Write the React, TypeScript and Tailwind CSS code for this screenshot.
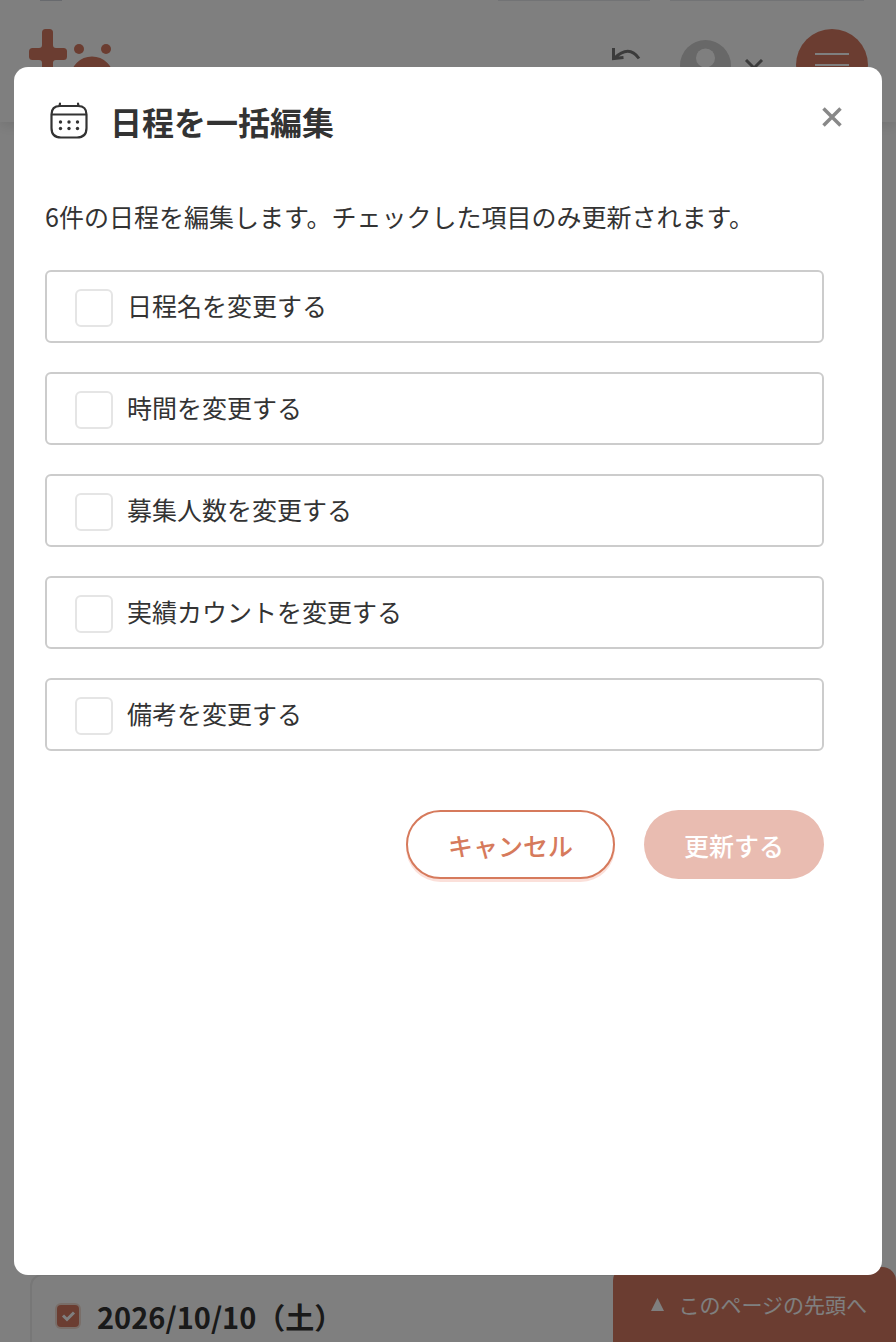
import { useState } from "react";

const FIELDS = [
  { id: "name", label: "日程名を変更する" },
  { id: "time", label: "時間を変更する" },
  { id: "capacity", label: "募集人数を変更する" },
  { id: "count", label: "実績カウントを変更する" },
  { id: "note", label: "備考を変更する" },
];

function Logo() {
  return (
    <svg className="w-[84px] h-[72px]" viewBox="0 0 84 72" fill="#d67a62" aria-label="ロゴ">
      <rect x="13" y="0" width="11" height="64" rx="3.500" />
      <rect x="0" y="19" width="38" height="12" rx="3.500" />
      <path d="M10 19q3 0 3-3h11q0 3 3 3v12q-3 0-3 3H13q0-3-3-3z" />
      <circle cx="50" cy="20" r="5" />
      <circle cx="77" cy="20" r="5" />
      <circle cx="63" cy="49" r="16" fill="none" stroke="#d67a62" strokeWidth="11" />
    </svg>
  );
}

function CalendarIcon() {
  return (
    <svg className="w-[38px] h-[38px] shrink-0" viewBox="0 0 38 38" fill="none" stroke="#333" strokeWidth="2.2" strokeLinecap="round">
      <path d="M10 4h18q8.500 0 8.500 8.500V26q0 9.500-9.500 9.500H11q-9.500 0-9.500-9.500V12.500Q1.500 4 10 4z" />
      <path d="M1.500 12.500h35" strokeLinecap="butt" />
      <path d="M9.500 4L10 1.500M28.500 4L28 1.500" />
      <g fill="#333" stroke="none">
        <circle cx="10.500" cy="20" r="1.700" />
        <circle cx="19" cy="20" r="1.700" />
        <circle cx="27.500" cy="20" r="1.700" />
        <circle cx="10.500" cy="26.500" r="1.700" />
        <circle cx="19" cy="26.500" r="1.700" />
        <circle cx="27.500" cy="26.500" r="1.700" />
      </g>
    </svg>
  );
}

function PageHeader() {
  return (
    <header className="bg-white shadow-[0_4px_12px_rgba(0,0,0,0.1)]">
      <div className="flex h-px pl-10 pr-8">
        <div className="w-[22px] bg-gray-300" />
        <div className="ml-auto w-[152px] bg-gray-200" />
        <div className="ml-5 w-[194px] bg-gray-200" />
      </div>
      <div className="flex items-center justify-between pt-7 pb-[21px] pl-[29px] pr-7">
        <a href="#top">
          <Logo />
        </a>
        <div className="flex items-center">
          <button aria-label="元に戻す" className="mr-[39px]">
            <svg className="w-[30px] h-[34px]" viewBox="0 0 30 34" fill="none" stroke="#777" strokeWidth="3">
              <path d="M2.500 0v10.500l10-1M3 10.500Q18-4 28 10.500" />
            </svg>
          </button>
          <button aria-label="アカウント" className="flex items-center mr-8">
            <svg className="w-[51px] h-[51px]" viewBox="0 0 51 51">
              <circle cx="25.500" cy="25.500" r="25.500" fill="#d0d0d0" />
              <circle cx="25.500" cy="18" r="9.500" fill="#fff" />
              <path d="M10 42q0-12 15.500-12T41 42z" fill="#fff" />
            </svg>
            <svg className="ml-[13px] w-5 h-3" viewBox="0 0 20 12" fill="none" stroke="#777" strokeWidth="3">
              <path d="M2 1l8 8 8-8" />
            </svg>
          </button>
          <button aria-label="メニュー" className="w-[72px] h-[72px] rounded-full bg-[#d67a62] flex flex-col items-center justify-center gap-[9px]">
            <span className="w-[34px] h-0.5 bg-white" />
            <span className="w-[34px] h-0.5 bg-white" />
            <span className="w-[34px] h-0.5 bg-white" />
          </button>
        </div>
      </div>
    </header>
  );
}

export default function App() {
  const [checked, setChecked] = useState<string[]>([]);

  const toggle = (id: string) => {
    setChecked((prev) =>
      prev.includes(id) ? prev.filter((v) => v !== id) : [...prev, id]
    );
  };

  return (
    <div className="min-h-screen flex flex-col bg-white text-[#333] font-['Noto_Sans_CJK_JP',sans-serif]">
      <PageHeader />

      <main className="flex-1 flex flex-col justify-end pl-[30px] pr-7">
        <div className="h-[68px] rounded-t-xl border-2 border-b-0 border-[#eee] pl-[25px] pt-4">
          <label className="flex items-center gap-[18px] text-[29px] leading-[48px] font-bold">
            <span className="relative flex w-[22px] h-[22px]">
              <input
                type="checkbox"
                defaultChecked
                className="appearance-none w-[22px] h-[22px] rounded-sm bg-[#d67a62] ring-2 ring-[#f3ddd3]"
              />
              <svg className="absolute inset-0 pointer-events-none" viewBox="0 0 22 22" fill="none" stroke="#fff" strokeWidth="3">
                <path d="M6 10.500l4 4 7-7" />
              </svg>
            </span>
            2026/10/10（土）
          </label>
        </div>
      </main>

      <a
        href="#top"
        className="fixed right-0 bottom-0 flex items-center gap-3.5 pl-[38px] pr-[29px] h-[75px] rounded-t-[14px] bg-[#d67a62] text-white text-[21px]"
      >
        <svg className="w-[13px] h-[13px]" viewBox="0 0 13 13" fill="currentColor">
          <path d="M6.500 0L13 13H0z" />
        </svg>
        このページの先頭へ
      </a>

      {/* Modal */}
      <div className="fixed inset-0 bg-black/50 px-3.5 py-[67px]">
        <div
          role="dialog"
          aria-modal="true"
          aria-labelledby="modal-title"
          className="h-full overflow-y-auto rounded-[14px] bg-white pl-[31px] pr-[58px] pt-[30px]"
        >
          <div className="flex items-center pl-[5px]">
            <CalendarIcon />
            <h1 id="modal-title" className="ml-[22px] text-[32px] leading-[48px] font-bold">
              日程を一括編集
            </h1>
            <button aria-label="閉じる" className="ml-auto -mr-5 mb-2 p-0.5">
              <svg className="w-5 h-5" viewBox="0 0 20 20" fill="none" stroke="#888" strokeWidth="3.500">
                <path d="M1.500 1.500l17 17M18.500 1.500l-17 17" />
              </svg>
            </button>
          </div>

          <p className="mt-[53px] text-[25px] leading-9">
            6件の日程を編集します。チェックした項目のみ更新されます。
          </p>

          <div className="mt-9 flex flex-col gap-[29px]">
            {FIELDS.map((field) => (
              <label
                key={field.id}
                className="flex items-center gap-3.5 h-[73px] pl-7 rounded-md border-2 border-[#ccc] text-[25px] leading-9 cursor-pointer"
              >
                <input
                  type="checkbox"
                  checked={checked.includes(field.id)}
                  onChange={() => toggle(field.id)}
                  className="appearance-none mt-0.5 w-[38px] h-[38px] rounded-md border-2 border-[#e5e5e5] bg-white checked:bg-[#d67a62]"
                />
                <span className="pb-1">{field.label}</span>
              </label>
            ))}
          </div>

          <div className="mt-[59px] flex justify-end gap-[29px] text-[25px] leading-9 font-medium">
            <button className="h-[69px] px-10 rounded-full border-2 border-[#d67a5c] bg-white text-[#d67a5c] shadow-[0_3px_0_#fbe0da]">
              キャンセル
            </button>
            <button
              disabled={checked.length === 0}
              className="h-[69px] px-10 rounded-full bg-[#d67a62] text-white disabled:bg-[#e9bcb1]"
            >
              更新する
            </button>
          </div>
        </div>
      </div>
    </div>
  );
}
